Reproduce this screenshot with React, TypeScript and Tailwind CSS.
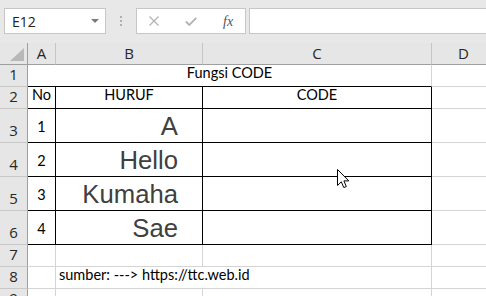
const cellFont = { fontFamily: 'Lato, "Open Sans", sans-serif' };

function RowHead({ n }: { n: number }) {
  return (
    <div className="flex items-end justify-center pb-[3px] bg-[#e6e6e6] border-r border-b border-r-[#9f9f9f] border-b-[#c8c8c8] text-[15px] leading-[18px] text-[#262626] font-['Open_Sans',sans-serif]">
      {n}
    </div>
  );
}

function ColHead({ label }: { label: string }) {
  return (
    <div className="flex items-center justify-center bg-[#e6e6e6] border-r border-b border-r-[#c6c6c6] border-b-[#9f9f9f] text-[15px] text-[#262626] font-['Open_Sans',sans-serif]">
      {label}
    </div>
  );
}

export default function App() {
  const rows = [
    { no: 1, word: 'A' },
    { no: 2, word: 'Hello' },
    { no: 3, word: 'Kumaha' },
    { no: 4, word: 'Sae' },
  ];

  return (
    <div className="relative w-[486px] h-[296px] overflow-hidden bg-white">
      {/* formula bar */}
      <div className="flex items-start h-[43px] pt-[8px] pl-[4px] bg-[#e8e8e8]">
        <div className="flex items-center justify-between w-[102px] h-[26px] pl-[7px] pr-[6px] bg-white border border-[#c6c6c6] text-[14px] text-[#222] font-['Open_Sans',sans-serif]">
          E12
          <svg width="8" height="4" viewBox="0 0 8 4">
            <path d="M0 0 L8 0 L4 4 Z" fill="#7a7a7a" />
          </svg>
        </div>
        <div className="flex flex-col items-center justify-center gap-[2px] w-[30px] h-[26px]">
          <span className="w-[2px] h-[2px] bg-[#b0b0b0]" />
          <span className="w-[2px] h-[2px] bg-[#b0b0b0]" />
          <span className="w-[2px] h-[2px] bg-[#b0b0b0]" />
        </div>
        <div className="flex items-center w-[110px] h-[26px] bg-white border border-[#c6c6c6]">
          <svg className="ml-[12px]" width="10" height="10" viewBox="0 0 10 10">
            <path d="M0.5 0.5 L9.5 9.5 M9.5 0.5 L0.5 9.5" stroke="#b4b4b4" strokeWidth="1.3" />
          </svg>
          <svg className="ml-[26px]" width="12" height="9" viewBox="0 0 12 9">
            <path d="M0.8 4.5 L4.3 8 L11.3 0.8" stroke="#b4b4b4" strokeWidth="1.8" fill="none" />
          </svg>
          <span className="ml-[26px] italic text-[14px] text-[#555] font-['Liberation_Serif',serif]">fx</span>
        </div>
        <div className="flex-1 h-[26px] ml-[3px] bg-white border border-[#c6c6c6] border-r-0" />
      </div>

      {/* sheet */}
      <div
        className="grid grid-cols-[28px_28px_147px_229px_64px] grid-rows-[22px_22px_22px_34px_34px_34px_34px_22px_22px_22px]"
        style={cellFont}
      >
        {/* column headers */}
        <div className="relative bg-[#e6e6e6] border-r border-b border-r-[#9f9f9f] border-b-[#9f9f9f]">
          <svg className="absolute left-[10px] top-[5px]" width="14" height="13" viewBox="0 0 14 13">
            <path d="M14 0 L14 13 L0 13 Z" fill="#b8b8b8" />
          </svg>
        </div>
        <ColHead label="A" />
        <ColHead label="B" />
        <ColHead label="C" />
        <ColHead label="D" />

        {/* row 1 */}
        <RowHead n={1} />
        <div className="col-span-3 flex items-end justify-center pb-[2px] border-r border-b border-r-[#d4d4d4] border-b-black text-[14.5px] text-black">
          Fungsi CODE
        </div>
        <div className="border-r border-b border-[#d4d4d4]" />

        {/* row 2 */}
        <RowHead n={2} />
        <div className="flex items-end justify-center pb-[2px] border-r border-b border-black text-[14.5px] text-black">No</div>
        <div className="flex items-end justify-center pb-[2px] border-r border-b border-black text-[14.5px] text-black">HURUF</div>
        <div className="flex items-end justify-center pb-[2px] border-r border-b border-black text-[14.5px] text-black">CODE</div>
        <div className="border-r border-b border-[#d4d4d4]" />

        {/* rows 3-6 */}
        {rows.map((r, i) => (
          <div key={r.no} className="contents">
            <RowHead n={i + 3} />
            <div className="flex items-end justify-center pb-[4px] border-r border-b border-black text-[14.5px] text-black">
              {r.no}
            </div>
            <div className="flex items-end justify-end pr-[24px] pb-[1px] border-r border-b border-black text-[25.7px] leading-[30px] text-[#404040] font-['Liberation_Sans',Arial,sans-serif]">
              {r.word}
            </div>
            <div className="border-r border-b border-black" />
            <div className="border-r border-b border-[#d4d4d4]" />
          </div>
        ))}

        {/* row 7 */}
        <RowHead n={7} />
        <div className="border-r border-b border-[#d4d4d4]" />
        <div className="border-r border-b border-[#d4d4d4]" />
        <div className="border-r border-b border-[#d4d4d4]" />
        <div className="border-r border-b border-[#d4d4d4]" />

        {/* row 8 */}
        <RowHead n={8} />
        <div className="border-r border-b border-[#d4d4d4]" />
        <div className="col-span-2 flex items-end pl-[3px] pb-[2px] border-r border-b border-[#d4d4d4] text-[14.5px] text-black whitespace-nowrap">
          sumber: ---&gt; https://ttc.web.id
        </div>
        <div className="border-r border-b border-[#d4d4d4]" />

        {/* row 9 */}
        <RowHead n={9} />
        <div className="border-r border-b border-[#d4d4d4]" />
        <div className="border-r border-b border-[#d4d4d4]" />
        <div className="border-r border-b border-[#d4d4d4]" />
        <div className="border-r border-b border-[#d4d4d4]" />
      </div>

      {/* mouse pointer */}
      <svg className="absolute left-[337px] top-[169px]" width="13" height="20" viewBox="0 0 13 20">
        <path
          d="M0.5 0.5 L0.5 16.5 L4.3 12.8 L6.8 18.6 L9.3 17.5 L6.9 11.9 L11.8 11.9 Z"
          fill="white"
          stroke="black"
          strokeWidth="1"
          strokeLinejoin="miter"
        />
      </svg>
    </div>
  );
}
